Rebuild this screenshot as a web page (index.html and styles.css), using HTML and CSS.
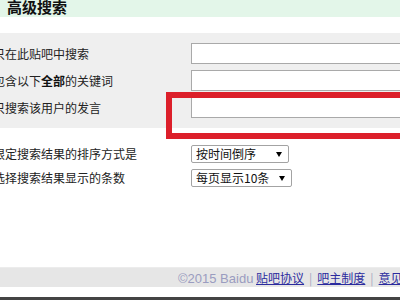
FILE: index.html
```html
<!DOCTYPE html>
<html lang="zh-CN">
<head>
<meta charset="utf-8">
<title>高级搜索</title>
<link rel="stylesheet" href="styles.css">
</head>
<body>
<div class="page">
  <div class="header"><h1 class="title">高级搜索</h1></div>
  <div class="panel">
    <div class="row"><label class="label">只在此贴吧中搜索</label><input class="field" type="text"></div>
    <div class="row"><label class="label">包含以下<b>全部</b>的关键词</label><input class="field" type="text"></div>
    <div class="row"><label class="label">只搜索该用户的发言</label><input class="field" type="text"></div>
  </div>
  <div class="options">
    <div class="row"><label class="label">限定搜索结果的排序方式是</label><span class="sel sel-a"><select><option>按时间倒序</option></select></span></div>
    <div class="row"><label class="label">选择搜索结果显示的条数</label><span class="sel sel-b"><select><option>每页显示10条</option></select></span></div>
  </div>
  <div class="footer">
    <span class="copy">©2015 Baidu</span> <a class="link" href="#">贴吧协议</a><span class="sep">|</span><a class="link" href="#">吧主制度</a><span class="sep">|</span><a class="link" href="#">意见反馈</a>
  </div>
  <div class="bottombar"></div>
</div>
<div class="highlight"></div>
</body>
</html>
```
FILE: styles.css
```css
html, body {
  margin: 0;
  padding: 0;
  background: #ffffff;
  overflow: hidden;
  width: 400px;
  height: 300px;
}
body {
  font-family: "Noto Sans CJK SC", "Liberation Sans", sans-serif;
  font-size: 12px;
  color: #222;
  position: relative;
}
.page {
  width: 400px;
}
.header {
  height: 17px;
  background: #e3f6e9;
  overflow: hidden;
}
.title {
  margin: -3px 0 0 7px;
  font-size: 15px;
  font-weight: bold;
  line-height: 20px;
  color: #111;
}
.panel {
  margin-top: 16px;
  background: #efefef;
  padding: 10px 0 10px 0;
  display: flex;
  flex-direction: column;
  gap: 6px;
}
.row {
  display: flex;
  align-items: center;
  white-space: nowrap;
}
.label {
  width: 198px;
  margin-left: -7px;
  flex: none;
  line-height: 16px;
}
.label b {
  font-weight: bold;
  color: #111;
}
.field {
  box-sizing: border-box;
  width: 230px;
  height: 21px;
  margin: 0;
  border: 1px solid #a9a9a9;
  background: #fff;
  flex: none;
}
.options {
  padding-top: 17px;
  display: flex;
  flex-direction: column;
  gap: 6px;
}
.sel {
  position: relative;
  display: inline-block;
  flex: none;
}
.sel select {
  appearance: none;
  -webkit-appearance: none;
  box-sizing: border-box;
  height: 18px;
  margin: 0;
  padding: 0 0 0 4px;
  border: 1px solid #a3a3a3;
  border-radius: 2px;
  background: #fff;
  font-family: "Noto Sans CJK SC", "Liberation Sans", sans-serif;
  font-size: 12px;
  line-height: 16px;
  color: #111;
}
.sel-a select { width: 98px; }
.sel-b select { width: 101px; }
.sel::after {
  content: "";
  position: absolute;
  right: 7px;
  top: 7px;
  border-left: 3px solid transparent;
  border-right: 3px solid transparent;
  border-top: 5px solid #000;
  pointer-events: none;
}
.footer {
  margin-top: 80px;
  height: 20px;
  box-sizing: border-box;
  background: #e6e6e6;
  border-top: 1px solid #ececec;
  padding-left: 178px;
  white-space: nowrap;
  overflow: hidden;
  line-height: 19px;
  font-size: 12px;
}
.copy {
  font-family: "Liberation Sans", sans-serif;
  font-size: 13px;
  color: #9a9cc0;
}
.link {
  color: #2b2b9e;
  text-decoration: underline;
}
.sep {
  color: #a8a8c0;
  margin: 0 5px;
}
.bottombar {
  margin-top: 10px;
  height: 3px;
  background: #444;
}
.highlight {
  position: absolute;
  left: 166px;
  top: 92px;
  width: 260px;
  height: 47px;
  box-sizing: border-box;
  border: 6px solid #dc1f2a;
}
```
